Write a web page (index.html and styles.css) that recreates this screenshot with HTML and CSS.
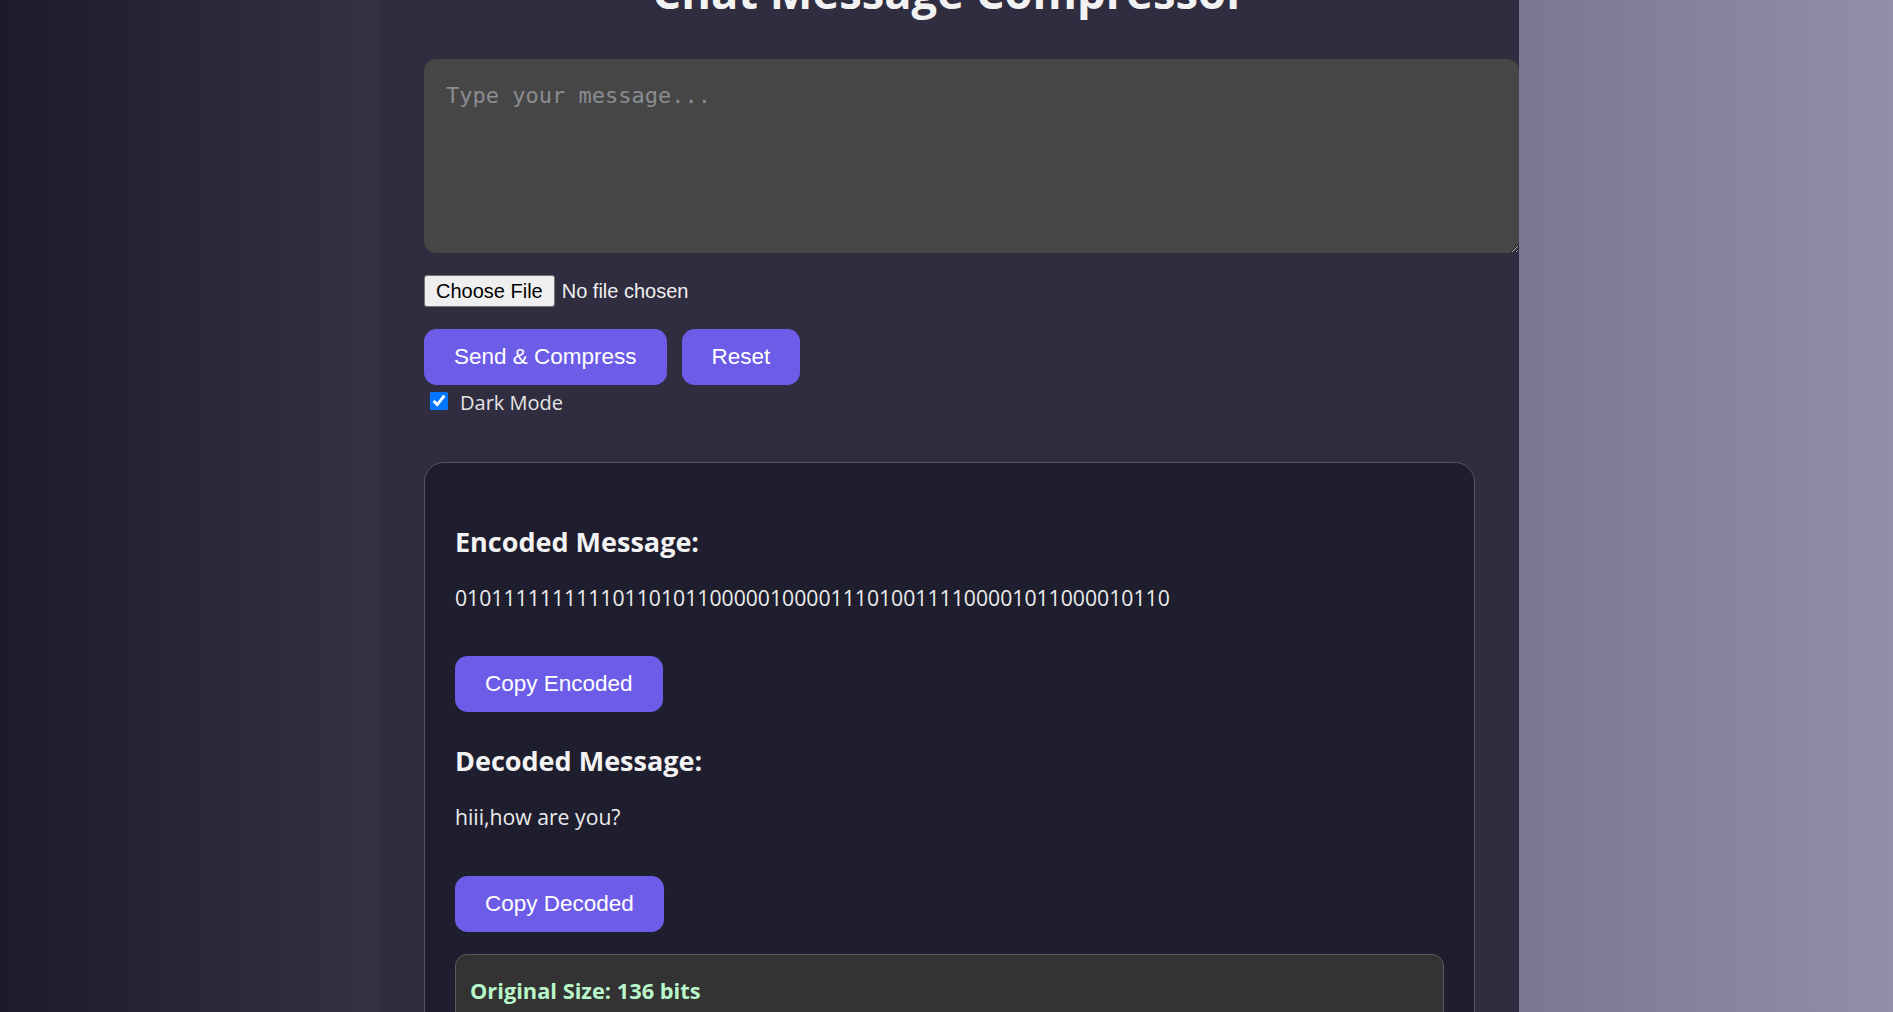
FILE: index.html
```html
<!DOCTYPE html>
<html lang="en">
<head>
<meta charset="utf-8">
<title>Chat Message Compressor</title>
<link rel="stylesheet" href="styles.css">
</head>
<body>
  <main class="app">
    <h1 class="title">Chat Message Compressor</h1>

    <textarea class="message" placeholder="Type your message..."></textarea>

    <div class="file-row">
      <input type="file" class="file-input">
    </div>

    <div class="actions">
      <button class="btn">Send &amp; Compress</button>
      <button class="btn">Reset</button>
    </div>

    <label class="mode-row">
      <input type="checkbox" class="mode-check" checked>
      <span class="mode-label">Dark Mode</span>
    </label>

    <section class="card">
      <h3 class="card-heading">Encoded Message:</h3>
      <p class="card-text">01011111111110110101100000100001110100111100001011000010110</p>
      <button class="btn btn-block">Copy Encoded</button>

      <h3 class="card-heading">Decoded Message:</h3>
      <p class="card-text">hiii,how are you?</p>
      <button class="btn btn-block">Copy Decoded</button>

      <div class="stats">
        <p class="stat">Original Size: 136 bits</p>
        <p class="stat">Compressed Size: 59 bits</p>
        <p class="stat">Compression Ratio: 56.62%</p>
      </div>
    </section>
  </main>
</body>
</html>
```

FILE: styles.css
```css
html {
  overflow: hidden;
}

body {
  margin: 0;
  min-height: 100vh;
  background: linear-gradient(to right, #1e1a2c, #938da9);
  font-family: "Open Sans", "Noto Sans", sans-serif;
  color: #ececec;
}

.app {
  display: flow-root;
  width: 1051px;
  margin-left: 380px;
  padding: 0 44px 60px;
  background: #2f2d3f;
  min-height: 100vh;
}

.title {
  margin: -38px 0 37px;
  font-size: 45.3px;
  line-height: 60px;
  font-weight: 700;
  text-align: center;
  color: #f2f2f2;
}

.message {
  display: block;
  width: 100%;
  height: 150px;
  margin: 0;
  padding: 24px 22px 20px;
  border: none;
  border-radius: 12px;
  background: #464646;
  color: #f0f0f0;
  font-family: "DejaVu Sans Mono", monospace;
  font-size: 22px;
  resize: vertical;
  outline: none;
}

.message::placeholder {
  color: #8a8d92;
}

.file-row {
  display: flex;
  align-items: center;
  height: 32px;
  margin-top: 22px;
}

.file-input {
  font-family: "Liberation Sans", Arial, sans-serif;
  font-size: 20px;
  color: #f0f0f0;
}

.file-input::file-selector-button {
  font: inherit;
  line-height: 24px;
  padding: 3px 11px;
  margin-right: 7px;
  border: 1px solid #767676;
  border-radius: 3px;
  background: #efefef;
  color: #000;
}

.actions {
  display: flex;
  gap: 15px;
  margin-top: 22px;
}

.btn {
  padding: 15px 30px;
  border: none;
  border-radius: 12.5px;
  background: #6c5ce7;
  color: #ffffff;
  font-family: "Liberation Sans", Arial, sans-serif;
  font-size: 22.5px;
  line-height: 26px;
  cursor: pointer;
}

.btn-block {
  display: block;
  margin-top: 44.5px;
}

.mode-row {
  display: flex;
  align-items: flex-start;
  margin-top: 4px;
  font-size: 20px;
  line-height: 27px;
  color: #e6e6e6;
}

.mode-check {
  width: 18px;
  height: 18px;
  margin: 3px 12px 0 6px;
  accent-color: #0075ff;
}

.card {
  margin-top: 46px;
  padding: 29.5px 30px 30px;
  border: 1px solid #56565c;
  border-radius: 20px;
  background: #1f1e2e;
}

.card-heading {
  margin: 31px 0 0;
  font-size: 27px;
  line-height: 36px;
  font-weight: 700;
  color: #f3f3f3;
}

.card-text {
  margin: 24px 0 0;
  font-size: 21.2px;
  line-height: 28px;
  color: #ececec;
}

.stats {
  margin-top: 22px;
  padding: 22px 14px 16px;
  border: 1px solid #5a5a5a;
  border-radius: 12px;
  background: #333333;
}

.stat {
  margin: 0 0 10px;
  font-size: 21.8px;
  line-height: 28px;
  font-weight: 700;
  color: #b9f6ca;
}
```
